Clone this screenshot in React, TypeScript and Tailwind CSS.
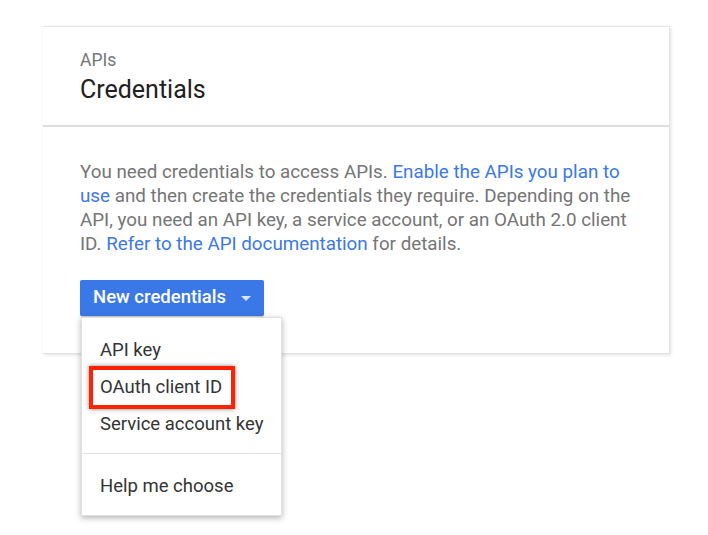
import React from "react";

export default function App() {
  return (
    <div className="w-[708px] h-[535px] bg-white overflow-hidden" style={{ fontFamily: "Roboto, 'Liberation Sans', sans-serif" }}>
      <div className="pt-[26px] pl-[43px]">
        <div className="w-[627px] h-[328px] bg-white border-t border-r border-b border-[#e4e4e4] shadow-[1px_1px_3px_rgba(0,0,0,0.12)]">
          <div className="h-[100px] pl-[37px] pt-[23px] border-b-2 border-[#dedede]">
            <div className="text-[17.5px] leading-[20px] text-[#757575]">APIs</div>
            <div className="text-[25px] leading-[30px] text-[#212121] mt-[5px]">Credentials</div>
          </div>
          <div className="pl-[37px] pt-[33px]">
            <p className="w-[558px] text-[18.8px] leading-[24px] text-[#757575]">
              You need credentials to access APIs.{" "}
              <span className="text-[#3b78e7]">Enable the APIs you plan to use</span> and then create the credentials they
              require. Depending on the API, you need an API key, a service account, or an OAuth 2.0 client ID.{" "}
              <span className="text-[#3b78e7]">Refer to the API documentation</span> for details.
            </p>
            <div className="relative mt-[24px] w-[184px]">
              <div className="h-[36px] w-[184px] rounded-[2px] bg-[#3b78e7] flex items-center pl-[13px] text-white text-[18.5px] font-medium shadow-[0_1px_1px_rgba(0,0,0,0.2)]">
                <span>New credentials</span>
                <svg width="10" height="5" viewBox="0 0 10 5" className="ml-[15px] mt-[1px]">
                  <path d="M0 0 L10 0 L5 5 Z" fill="rgba(255,255,255,0.8)" />
                </svg>
              </div>
              <div className="absolute left-[1px] top-[37px] w-[201px] bg-white border border-[#e0e0e0] shadow-[0_2px_6px_rgba(0,0,0,0.3)] z-10">
                <div className="pt-[14px] pb-[10px] text-[18.5px] text-[#333]">
                  <div className="h-[37px] flex items-center pl-[18px]">API key</div>
                  <div className="h-[37px] flex items-center pl-[7px]">
                    <div className="border-[4px] border-[#ff2200] pl-[7px] w-[146px] h-[43px] flex items-center shadow-[0_0_4px_rgba(0,0,0,0.5)]">OAuth client ID</div>
                  </div>
                  <div className="h-[37px] flex items-center pl-[18px]">Service account key</div>
                </div>
                <div className="border-t border-[#e0e0e0]" />
                <div className="pt-[15px] pb-[10px] text-[18.5px] text-[#333]">
                  <div className="h-[36px] flex items-center pl-[18px]">Help me choose</div>
                </div>
              </div>
            </div>
          </div>
        </div>
      </div>
    </div>
  );
}
